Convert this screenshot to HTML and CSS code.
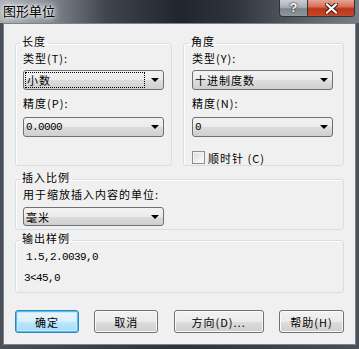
FILE: index.html
```html
<!DOCTYPE html>
<html lang="zh-CN">
<head>
  <meta charset="UTF-8">
  <title>图形单位</title>
  <link rel="stylesheet" href="styles.css">
</head>
<body>
  <div class="window">
    <!-- Title bar with caption buttons -->
    <div class="titlebar">
      <span class="title">图形单位</span>
      <div class="caption">
        <span class="cap cap-help">?</span>
        <span class="cap cap-close">
          <svg width="13" height="11" viewBox="0 0 13 11">
            <path d="M2 1.5 L11 9.5 M11 1.5 L2 9.5" stroke="#3a1a14" stroke-width="4" stroke-linecap="square"/>
            <path d="M2 1.5 L11 9.5 M11 1.5 L2 9.5" stroke="#fff" stroke-width="2.2" stroke-linecap="square"/>
          </svg>
        </span>
      </div>
    </div>

    <div class="client">
      <div class="row">
        <fieldset class="group group-len">
          <legend>长度</legend>
          <div class="lbl">类型(T):</div>
          <div class="combo">
            <span class="focus-rect">小数</span>
            <i class="arrow"></i>
          </div>
          <div class="lbl lbl-gap">精度(P):</div>
          <div class="combo combo-2">
            <span class="val mono">0.0000</span>
            <i class="arrow"></i>
          </div>
        </fieldset>

        <fieldset class="group group-ang">
          <legend>角度</legend>
          <div class="lbl">类型(Y):</div>
          <div class="combo">
            <span class="val">十进制度数</span>
            <i class="arrow"></i>
          </div>
          <div class="lbl lbl-gap">精度(N):</div>
          <div class="combo combo-2">
            <span class="val mono">0</span>
            <i class="arrow"></i>
          </div>
          <label class="check">
            <span class="box"></span>
            <span>顺时针 (C)</span>
          </label>
        </fieldset>
      </div>

      <fieldset class="group group-scale">
        <legend>插入比例</legend>
        <div class="lbl">用于缩放插入内容的单位:</div>
        <div class="combo combo-scale">
          <span class="val">毫米</span>
          <i class="arrow"></i>
        </div>
      </fieldset>

      <fieldset class="group group-sample">
        <legend>输出样例</legend>
        <div class="sample mono first">1.5,2.0039,0</div>
        <div class="sample mono second">3&lt;45,0</div>
      </fieldset>

      <div class="buttons">
        <button class="btn btn-default">确定</button>
        <button class="btn">取消</button>
        <button class="btn btn-wide">方向(D)...</button>
        <button class="btn btn-help">帮助(H)</button>
      </div>
    </div>
  </div>
</body>
</html>
```

FILE: styles.css
```css
/* Page and window frame */
body {
  margin: 0;
  font-family: "Noto Sans CJK SC", "Liberation Sans", sans-serif;
  font-size: 11px;
  letter-spacing: 1px;
  line-height: 12px;
  color: #000;
  background: #fff;
}

.window {
  width: 359px;
  height: 349px;
  display: flex;
  flex-direction: column;
  background: linear-gradient(to right, #4a5058, #2c333b 50%, #4a5159);
}

/* Aero-like title bar */
.titlebar {
  height: 23px;
  flex: none;
  display: flex;
  justify-content: space-between;
  background: linear-gradient(to right, #a9afb5 0, #8a9097 12%, #3d444c 30%, #1f262e 50%, #2d343c 65%, #5b6269 85%, #777e85 100%);
}
.title {
  padding: 3px 0 0 3px;
  font-size: 13px;
  letter-spacing: 0;
  line-height: 16px;
  color: #000;
  text-shadow: 0 0 6px #fff, 0 0 10px #fff, 0 0 3px #fff;
}
.caption {
  display: flex;
  height: 16px;
  margin-right: 4px;
  border: 1px solid #2e3338;
  border-top: none;
  border-radius: 0 0 4px 4px;
  overflow: hidden;
}
.cap {
  display: flex;
  align-items: center;
  justify-content: center;
  height: 16px;
}
.cap-help {
  width: 27px;
  color: #fff;
  font-family: "Liberation Sans", sans-serif;
  font-weight: bold;
  font-size: 13px;
  letter-spacing: 0;
  text-shadow: 0 0 2px #222, 0 0 1px #000;
  background: linear-gradient(to bottom, #c9ced3 0, #a9b0b6 45%, #7d858c 55%, #8f979e 100%);
  border-right: 1px solid #2e3338;
}
.cap-close {
  width: 46px;
  background: linear-gradient(to bottom, #e6a594 0, #d5725c 40%, #bd3516 55%, #c4492a 100%);
}

/* Client area */
.client {
  flex: 1;
  margin: 0 3px 4px 3px;
  padding: 11px 11px 0 11px;
  background: #f0f0f0;
  border: 1px solid #7c8288;
}

.row {
  display: flex;
  gap: 11px;
}

/* Group boxes */
.group {
  margin: 0;
  min-width: 0;
  border: 1px solid #d5dfe5;
  border-radius: 3px;
  box-shadow: inset 1px 1px 0 #fff;
  padding: 0 7px 1px 7px;
}
.group legend {
  margin-left: -3px;
  padding: 0 2px 5px 2px;
  line-height: 12px;
}
.group-len {
  width: 157px;
  box-sizing: border-box;
}
.group-ang {
  width: 161px;
  box-sizing: border-box;
  padding-left: 8px;
}
.group-scale {
  margin-top: 5px;
  padding-bottom: 3px;
}
.group-sample {
  margin-top: 2px;
  height: 61px;
  box-sizing: border-box;
}

.lbl {
  height: 12px;
}
.lbl-gap {
  margin-top: 7px;
}

/* Drop-down list (Win7 style) */
.combo {
  position: relative;
  width: 141px;
  height: 20px;
  margin-top: 6px;
  box-sizing: border-box;
  border: 1px solid #707070;
  border-radius: 3px;
  background: linear-gradient(to bottom, #f2f2f2 0, #ebebeb 50%, #dddddd 51%, #cfcfcf 100%);
  display: flex;
  align-items: center;
}
.combo-2 {
  margin-top: 8px;
}
.combo-scale {
  margin-top: 7px;
  height: 19px;
}
.val {
  padding-left: 2px;
}
.focus-rect {
  margin: 0 0 0 1px;
  width: 120px;
  height: 16px;
  box-sizing: border-box;
  padding-left: 1px;
  line-height: 14px;
  outline: 1px dotted #000;
  outline-offset: -1px;
  border: 1px solid transparent;
}
.arrow {
  position: absolute;
  right: 4px;
  top: 7px;
  width: 0;
  height: 0;
  border-left: 4px solid transparent;
  border-right: 4px solid transparent;
  border-top: 4px solid #000;
}

.mono {
  font-family: "Liberation Mono", monospace;
  font-size: 11px;
  letter-spacing: -0.6px;
}

/* Checkbox */
.check {
  display: flex;
  align-items: center;
  gap: 3px;
  margin-top: 14px;
  height: 13px;
}
.box {
  width: 13px;
  height: 13px;
  box-sizing: border-box;
  border: 1px solid #8e8f8f;
  background: linear-gradient(135deg, #dcdcdc, #fdfdfd);
  box-shadow: inset 0 0 0 1px #f4f4f4;
}

/* Output sample lines */
.sample {
  height: 12px;
}
.sample.first {
  margin-top: 2px;
  padding-left: 3px;
}
.sample.second {
  margin-top: 9px;
  padding-left: 1px;
}

/* Dialog buttons */
.buttons {
  display: flex;
  justify-content: space-between;
  margin-top: 17px;
}
.btn {
  width: 64px;
  height: 23px;
  padding: 0;
  font-family: "Noto Sans CJK SC", "Liberation Sans", sans-serif;
  font-size: 11px;
  letter-spacing: 1px;
  color: #000;
  border: 1px solid #707070;
  border-radius: 3px;
  background: linear-gradient(to bottom, #f2f2f2 0, #ebebeb 50%, #dddddd 51%, #cfcfcf 100%);
  box-shadow: inset 0 0 0 1px #fbfbfb;
}
.btn-default {
  border-color: #3c7fb1;
  background: linear-gradient(to bottom, #eaf6fd 0, #d9f0fc 50%, #bee6fd 51%, #a7d9f5 100%);
  box-shadow: inset 0 0 0 1px #48c3f5, inset 0 0 0 2px #c6ecfc;
}
.btn-wide {
  width: 90px;
}
.btn-help {
  width: 65px;
}
```
